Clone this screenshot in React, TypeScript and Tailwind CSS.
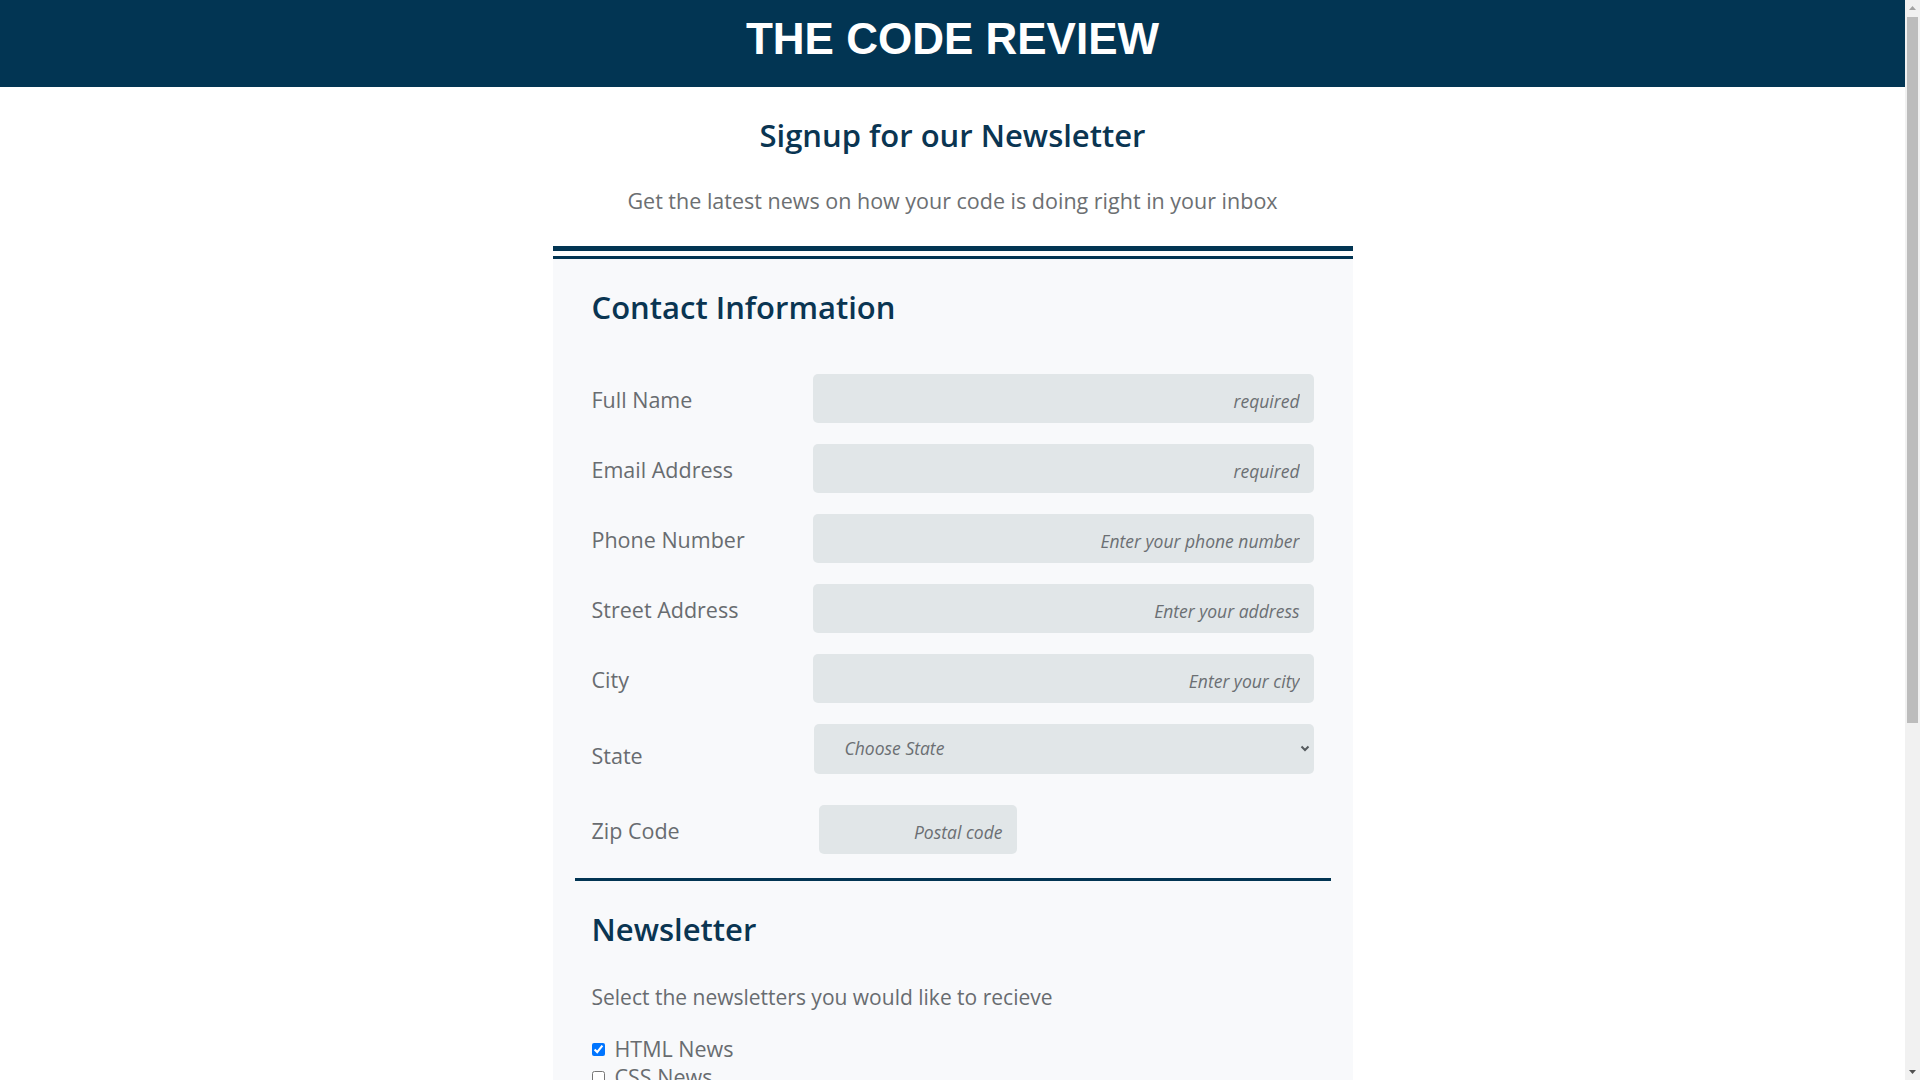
import React from "react";

const fields = [
  { label: "Full Name", placeholder: "required" },
  { label: "Email Address", placeholder: "required" },
  { label: "Phone Number", placeholder: "Enter your phone number" },
  { label: "Street Address", placeholder: "Enter your address" },
  { label: "City", placeholder: "Enter your city" },
];

const newsletters = [
  { name: "HTML News", checked: true },
  { name: "CSS News", checked: false },
  { name: "JavaScript News", checked: false },
  { name: "Accessibility News", checked: false },
];

const FieldRow = ({ label, placeholder }: { label: string; placeholder: string }) => (
  <div className="flex items-center mb-[21px]">
    <label className="w-[221px] shrink-0 pt-[2px] text-[21.5px] leading-[28px] text-[#686c70]">{label}</label>
    <input
      type="text"
      placeholder={placeholder}
      className="w-[501px] h-[49px] rounded-[5px] bg-[#e1e6e8] pr-[14px] pt-[5px] text-right text-[17.5px] text-[#333] outline-none placeholder:italic placeholder:text-[#6b6f73]"
    />
  </div>
);

// fake classic scrollbar, the page overflows in the reference
const Scrollbar = () => (
  <div className="fixed right-0 top-0 flex h-screen w-[15px] flex-col items-center bg-[#f1f1f1]">
    <svg width="15" height="17" viewBox="0 0 15 17">
      <path d="M4 10 L7.5 6 L11 10 Z" fill="#a3a3a3" />
    </svg>
    <div className="h-[706px] w-[11px] bg-[#bcbcbc]" />
    <div className="flex-1" />
    <svg width="15" height="17" viewBox="0 0 15 17">
      <path d="M4 7 L7.5 11 L11 7 Z" fill="#505050" />
    </svg>
  </div>
);

export default function App() {
  return (
    <div className="min-h-screen bg-white" style={{ fontFamily: "'Open Sans', 'Noto Sans', sans-serif" }}>
      <div className="mr-[15px] pb-[120px]">
        <header className="h-[87px] bg-[#023553] pt-[17px] text-center">
          <h1
            className="text-[44px] leading-[44px] font-bold text-white"
            style={{ fontFamily: "'Liberation Sans', Arial, sans-serif" }}
          >
            THE CODE REVIEW
          </h1>
        </header>

        <h2 className="mt-[28px] text-center text-[31px] leading-[40px] font-semibold text-[#0a3552]">
          Signup for our Newsletter
        </h2>
        <p className="mt-[32px] text-center text-[21.5px] leading-[28px] text-[#6c6f72]">
          Get the latest news on how your code is doing right in your inbox
        </p>

        <form className="mx-auto mt-[31px] w-[800px] border-t-[5px] border-[#023553] pt-[5px]">
          <div className="border-t-[3px] border-[#023553] bg-[#f8f9fb] pb-[40px]">
            <section className="px-[39px] pt-[28px]">
              <h2 className="mb-[47px] text-[31px] leading-[40px] font-semibold text-[#0a3552]">Contact Information</h2>
              {fields.map((f) => (
                <FieldRow key={f.label} label={f.label} placeholder={f.placeholder} />
              ))}
              <div className="flex items-center">
                <label className="w-[221px] shrink-0 pt-[14px] text-[21.5px] leading-[28px] text-[#686c70]">State</label>
                <div className="relative ml-px">
                  <select
                    defaultValue=""
                    className="w-[500px] h-[50px] appearance-none rounded-[5px] bg-[#e1e6e8] pl-[31px] pb-[2px] text-[17.5px] italic text-[#6b6f73] outline-none"
                  >
                    <option value="" disabled>
                      Choose State
                    </option>
                    <option>Alabama</option>
                    <option>Alaska</option>
                    <option>Arizona</option>
                  </select>
                  <svg
                    className="pointer-events-none absolute right-[4px] top-[21px]"
                    width="10"
                    height="7"
                    viewBox="0 0 10 7"
                    fill="none"
                  >
                    <path d="M1.5 1.5 L5 5 L8.5 1.5" stroke="#555a5e" strokeWidth="2" />
                  </svg>
                </div>
              </div>
              <div className="mt-[31px] flex items-center">
                <label className="w-[221px] shrink-0 pt-[2px] text-[21.5px] leading-[28px] text-[#686c70]">Zip Code</label>
                <input
                  type="text"
                  placeholder="Postal code"
                  className="ml-[6px] w-[198px] h-[49px] rounded-[5px] bg-[#e1e6e8] pr-[14px] pt-[5px] text-right text-[17.5px] text-[#333] outline-none placeholder:italic placeholder:text-[#6b6f73]"
                />
              </div>
            </section>

            <div className="mx-[22px] mt-[24px] h-[3px] bg-[#023553]" />

            <section className="px-[39px] pt-[28px]">
              <h2 className="text-[31px] leading-[40px] font-semibold text-[#0a3552]">Newsletter</h2>
              <p className="mt-[34px] text-[21px] leading-[28px] text-[#686c70]">
                Select the newsletters you would like to recieve
              </p>
              <div className="mt-[24px] flex flex-col">
                {newsletters.map((n) => (
                  <label key={n.name} className="flex items-center text-[21.5px] leading-[28px] text-[#686c70]">
                    <input type="checkbox" defaultChecked={n.checked} className="mr-[10px] h-[13px] w-[13px]" />
                    {n.name}
                  </label>
                ))}
              </div>
              <button
                type="button"
                className="mt-[40px] rounded-[5px] bg-[#023553] px-[32px] py-[12px] text-[20px] font-semibold text-white"
              >
                Sign Up
              </button>
            </section>
          </div>
        </form>
      </div>
      <Scrollbar />
    </div>
  );
}
